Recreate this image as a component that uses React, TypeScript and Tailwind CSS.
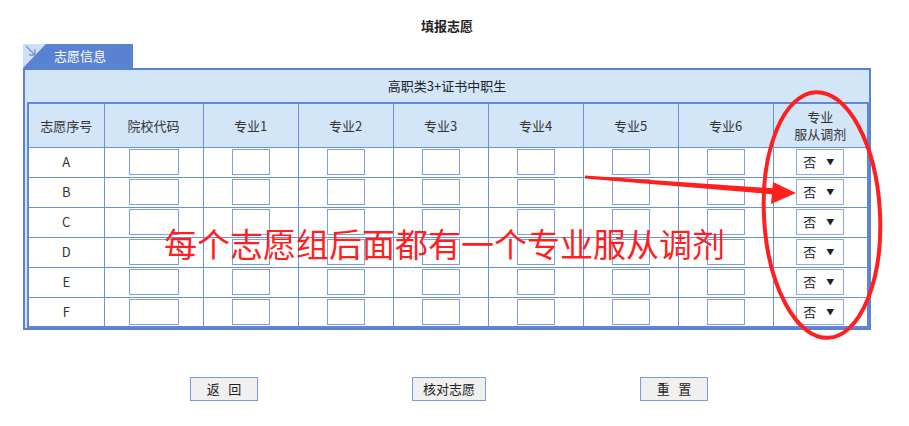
const majors = ["专业1", "专业2", "专业3", "专业4", "专业5", "专业6"];
const rows = ["A", "B", "C", "D", "E", "F"];

function Box({ wide }: { wide?: boolean }) {
  return (
    <div
      className={`mx-auto h-[26px] border border-[#7d9ee2] bg-white ${
        wide ? "w-[50px]" : "w-[38px]"
      }`}
    />
  );
}

function Pick() {
  return (
    <div className="mx-auto flex h-[26px] w-[48px] items-center justify-between border border-[#8eaae6] bg-white pl-[6px] pr-[9px] text-[13px] text-[#222]">
      <span>否</span>
      <span className="text-[8px]">▼</span>
    </div>
  );
}

export default function App() {
  return (
    <div
      className="relative h-[426px] w-[909px] overflow-hidden bg-white text-[#333]"
      style={{ fontFamily: '"Noto Sans CJK SC", "Noto Sans", sans-serif' }}
    >
      <div className="ml-[23px] w-[848px] pt-[18px]">
        <h1 className="h-[16px] text-center text-[13px] font-bold leading-[16px] text-[#222]">
          填报志愿
        </h1>

        {/* tab */}
        <div className="relative mt-[10px] h-[24px] w-[110px] bg-[#cde0f8]">
          <div className="flex h-full items-center bg-[#5a82d3] pl-[31px] text-[13px] text-white [clip-path:polygon(23px_0,100%_0,100%_100%,0_100%)]">
            志愿信息
          </div>
          <svg className="absolute left-[2px] top-[1px]" width="12" height="12" viewBox="0 0 12 12">
            <path d="M1 1 L10 10 M10 4 L10 10 L4 10" stroke="#7893c8" strokeWidth="1.3" fill="none" />
          </svg>
        </div>

        <div className="border-2 border-[#5a82d3] bg-[#d3e6f8] px-[2px]">
          <div className="flex h-[32px] items-center justify-center text-[13px] text-[#222]">
            高职类3+证书中职生
          </div>
          <table className="w-[840px] table-fixed border-collapse border-2 border-[#5f86d8] text-[13px]">
            <colgroup>
              <col className="w-[76px]" />
              <col className="w-[99px]" />
              {majors.map((m) => (
                <col key={m} className="w-[95px]" />
              ))}
              <col className="w-[95px]" />
            </colgroup>
            <thead>
              <tr className="h-[44px] bg-[#d3e6f8] text-[#333]">
                <th className="border border-[#6a8fdc] font-normal">志愿序号</th>
                <th className="border border-[#6a8fdc] font-normal">院校代码</th>
                {majors.map((m) => (
                  <th key={m} className="border border-[#6a8fdc] font-normal">
                    {m}
                  </th>
                ))}
                <th className="border border-[#6a8fdc] font-normal leading-[17px]">
                  专业
                  <br />
                  服从调剂
                </th>
              </tr>
            </thead>
            <tbody className="bg-white">
              {rows.map((r) => (
                <tr key={r} className="h-[30px]">
                  <td className="border border-[#6a8fdc] text-center text-[#333]">{r}</td>
                  <td className="border border-[#6a8fdc]">
                    <Box wide />
                  </td>
                  {majors.map((m) => (
                    <td key={m} className="border border-[#6a8fdc]">
                      <Box />
                    </td>
                  ))}
                  <td className="border border-[#6a8fdc]">
                    <Pick />
                  </td>
                </tr>
              ))}
            </tbody>
          </table>
        </div>

        <div className="mt-[47px] flex gap-[154px] pl-[167px]">
          <button className="h-[24px] w-[68px] border border-[#7a9be0] bg-[#f0f0f0] text-[13px] text-[#222]">
            返&nbsp;&nbsp;&nbsp;回
          </button>
          <button className="h-[24px] w-[74px] border border-[#7a9be0] bg-[#f0f0f0] text-[13px] text-[#222]">
            核对志愿
          </button>
          <button className="h-[24px] w-[68px] border border-[#7a9be0] bg-[#f0f0f0] text-[13px] text-[#222]">
            重&nbsp;&nbsp;&nbsp;置
          </button>
        </div>
      </div>

      {/* red annotation */}
      <div className="absolute left-[164px] top-[223px] text-[33px] leading-[40px] text-[#ff1f1f]">
        每个志愿组后面都有一个专业服从调剂
      </div>
      <svg className="absolute left-0 top-0" width="909" height="426" viewBox="0 0 909 426">
        <ellipse
          cx="822"
          cy="215"
          rx="58"
          ry="123"
          transform="rotate(-3 822 215)"
          fill="none"
          stroke="#ff1f1f"
          strokeWidth="4"
        />
        <polygon points="585,175.5 776,188.5 775,194.5 585,178.5" fill="#ff1f1f" />
        <polygon points="773,182 796,193 771,204" fill="#ff1f1f" />
      </svg>
    </div>
  );
}
